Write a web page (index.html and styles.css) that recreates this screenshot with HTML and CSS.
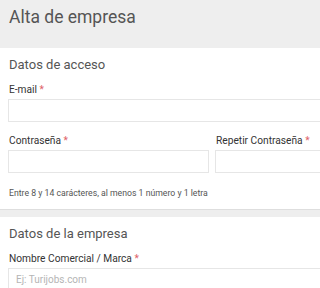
FILE: index.html
```html
<!DOCTYPE html>
<html lang="es">
<head>
<meta charset="utf-8">
<link rel="stylesheet" href="styles.css">
</head>
<body>
<div class="page">
  <header class="page-header">
    <h1 class="page-title">Alta de empresa</h1>
  </header>
  <section class="card">
    <h2 class="card-title">Datos de acceso</h2>
    <div class="field">
      <label class="label">E-mail <span class="req">*</span></label>
      <div class="input"></div>
    </div>
    <div class="row">
      <div class="field">
        <label class="label">Contraseña <span class="req">*</span></label>
        <div class="input"></div>
      </div>
      <div class="field">
        <label class="label">Repetir Contraseña <span class="req">*</span></label>
        <div class="input"></div>
      </div>
    </div>
    <p class="help">Entre 8 y 14 carácteres, al menos 1 número y 1 letra</p>
  </section>
  <section class="card">
    <h2 class="card-title">Datos de la empresa</h2>
    <div class="field">
      <label class="label">Nombre Comercial / Marca <span class="req">*</span></label>
      <div class="input"><span class="placeholder">Ej: Turijobs.com</span></div>
    </div>
  </section>
</div>
</body>
</html>
```
FILE: styles.css
```css
html, body {
  margin: 0;
  padding: 0;
  background: #eeeeee;
  font-family: Roboto, "Liberation Sans", sans-serif;
}
.page {
  width: 100%;
  height: 288px;
  overflow: hidden;
}
.page-header {
  height: 48px;
  padding: 0 9px;
  box-sizing: border-box;
  display: flex;
  align-items: center;
}
.page-title {
  margin: 0 0 14px;
  font-size: 17.5px;
  font-weight: 400;
  color: #555555;
  white-space: nowrap;
}
.card {
  background: #ffffff;
  padding: 8px 0 10px 8px;
  margin-bottom: 7px;
  border-bottom: 1px solid #dedede;
  overflow: hidden;
}
.card-title {
  margin: 0 0 9px 1px;
  font-size: 13px;
  font-weight: 400;
  color: #555555;
  line-height: 18px;
  white-space: nowrap;
}
.field {
  display: flex;
  flex-direction: column;
  width: 408px;
}
.row .field {
  width: auto;
}
.label {
  font-size: 10.2px;
  line-height: 14px;
  color: #333333;
  margin: 0 0 2px 1px;
  white-space: nowrap;
}
.req {
  color: #e0626a;
}
.input {
  height: 23px;
  border: 1px solid #e6e6e6;
  box-sizing: border-box;
  margin-bottom: 12px;
  display: flex;
  align-items: center;
  padding-left: 7px;
}
.placeholder {
  font-size: 10px;
  color: #b5b5b5;
  white-space: nowrap;
}
.row {
  display: grid;
  grid-template-columns: 201px 201px;
  column-gap: 6px;
  width: 408px;
}
.help {
  margin: 2px 0 0 1px;
  font-size: 8.7px;
  line-height: 12px;
  color: #555555;
  white-space: nowrap;
}
```
